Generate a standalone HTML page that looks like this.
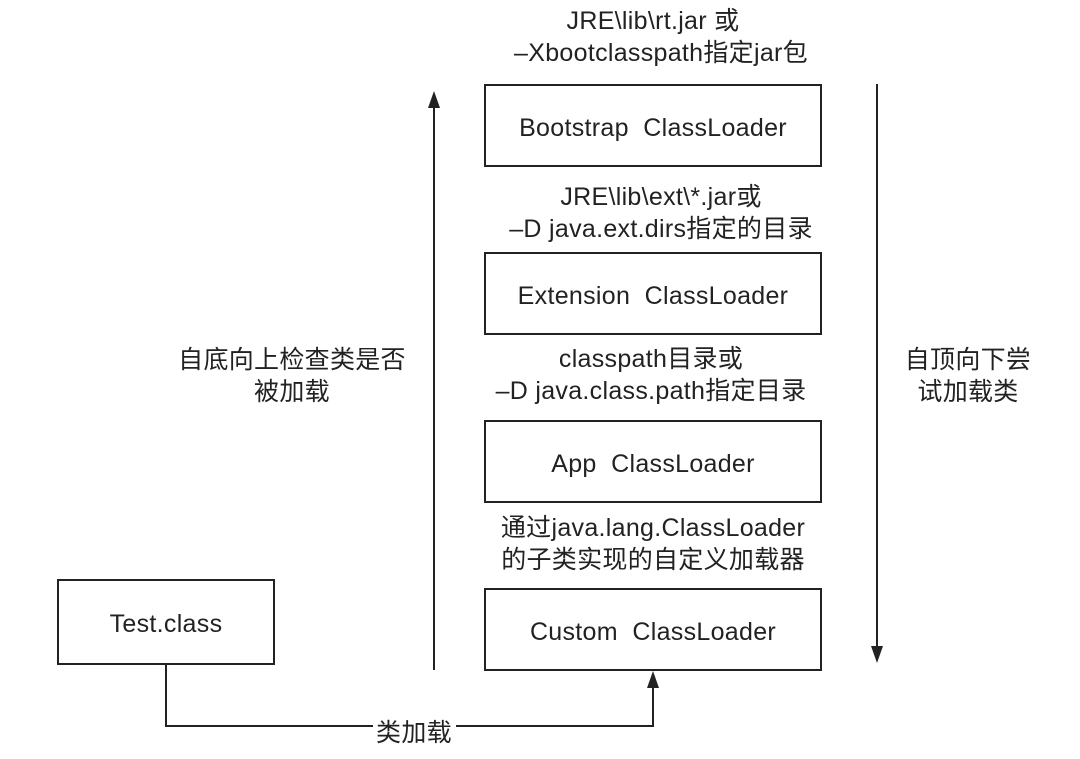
<!DOCTYPE html>
<html><head><meta charset="utf-8"><style>
body{margin:0;background:#fff}
svg text{font-family:"Liberation Sans","Noto Sans CJK SC",sans-serif;font-size:25px;fill:#222;text-anchor:middle;letter-spacing:0.3px}
</style></head><body>
<svg width="1080" height="754" viewBox="0 0 1080 754" xmlns="http://www.w3.org/2000/svg">
<g fill="#fff" stroke="#222" stroke-width="2">
<rect x="485" y="85" width="336" height="81"/>
<rect x="485" y="253" width="336" height="81"/>
<rect x="485" y="421" width="336" height="81"/>
<rect x="485" y="589" width="336" height="81"/>
<rect x="58" y="580" width="216" height="84"/>
</g>
<g stroke="#222" stroke-width="2" fill="none">
<line x1="434" y1="108" x2="434" y2="670"/>
<line x1="877" y1="84" x2="877" y2="646"/>
<polyline points="166,664 166,726 373,726"/>
<polyline points="456,726 653,726 653,686"/>
</g>
<g fill="#222">
<polygon points="434,91 428,108 440,108"/>
<polygon points="877,663 871,646 883,646"/>
<polygon points="653,671 647,688 659,688"/>
</g>
<text x="653" y="29">JRE\lib\rt.jar 或</text>
<text x="661" y="61">–Xbootclasspath指定jar包</text>
<text x="653" y="136">Bootstrap&#160;&#160;ClassLoader</text>
<text x="661" y="205">JRE\lib\ext\*.jar或</text>
<text x="661" y="237">–D java.ext.dirs指定的目录</text>
<text x="653" y="304">Extension&#160;&#160;ClassLoader</text>
<text x="651" y="367">classpath目录或</text>
<text x="651" y="399">–D java.class.path指定目录</text>
<text x="653" y="472">App&#160;&#160;ClassLoader</text>
<text x="653" y="536">通过java.lang.ClassLoader</text>
<text x="653" y="568">的子类实现的自定义加载器</text>
<text x="653" y="640">Custom&#160;&#160;ClassLoader</text>
<text x="166" y="632">Test.class</text>
<text x="292" y="368">自底向上检查类是否</text>
<text x="292" y="400">被加载</text>
<text x="968" y="368">自顶向下尝</text>
<text x="968" y="400">试加载类</text>
<text x="414" y="741">类加载</text>
</svg>
</body></html>
